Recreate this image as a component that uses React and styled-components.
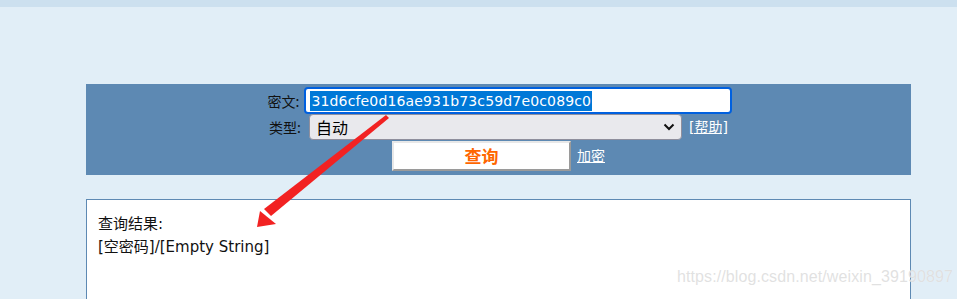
import React from 'react'
import styled, { createGlobalStyle } from 'styled-components'

const GlobalStyle = createGlobalStyle`
  html, body {
    margin: 0;
    padding: 0;
    background: #e1eef7;
    font-family: 'Noto Sans CJK SC', 'Liberation Sans', sans-serif;
  }
`

const Page = styled.div`
  position: relative;
  width: 957px;
  height: 299px;
  overflow: hidden;
  background: #e1eef7;
`

const TopStrip = styled.div`
  height: 7px;
  background: #cce0ef;
`

const Panel = styled.form`
  margin: 77px 0 0 86px;
  width: 825px;
  height: 91px;
  box-sizing: border-box;
  padding-top: 3px;
  background: #5d89b3;
  display: flex;
  flex-direction: column;
  align-items: center;
`

const Row = styled.div`
  display: flex;
  align-items: center;
  height: ${(p) => p.$h}px;
  margin-left: ${(p) => p.$shift || 0}px;
`

const Label = styled.span`
  font-size: 14px;
  color: #111;
  margin-right: ${(p) => p.$gap}px;
  line-height: 1;
`

const FakeInput = styled.div`
  width: 428px;
  height: 27px;
  box-sizing: border-box;
  border: 2px solid #0060df;
  border-radius: 4px;
  background: #fff;
  display: flex;
  align-items: center;
  padding-left: 4px;
`

const Selected = styled.span`
  background: #0078d7;
  color: #fff;
  font-family: 'DejaVu Sans', Verdana, sans-serif;
  font-size: 14px;
  letter-spacing: 0.15px;
  line-height: 20px;
  padding: 0 1px;
`

const Select = styled.div`
  width: 373px;
  height: 26px;
  box-sizing: border-box;
  border: 1px solid #8f8f9d;
  border-radius: 4px;
  background: #e9e9ed;
  display: flex;
  align-items: center;
  justify-content: space-between;
  padding: 0 6px 0 6px;
  font-size: 16px;
  color: #000;
`

const Link = styled.a`
  color: #fff;
  font-family: 'DejaVu Sans', 'Noto Sans CJK SC', sans-serif;
  font-size: 14px;
  text-decoration: underline;
  margin-left: ${(p) => p.$gap}px;
  line-height: 1;
`

const QueryButton = styled.button`
  width: 179px;
  height: 30px;
  box-sizing: border-box;
  background: #fff;
  border: 2px solid;
  border-color: #e8e8e8 #9a9a9a #9a9a9a #e8e8e8;
  color: #ff6600;
  font-family: 'Noto Sans CJK SC', sans-serif;
  font-weight: bold;
  font-size: 17px;
  padding: 0;
  line-height: 1;
`

const ResultBox = styled.div`
  margin: 24px 0 0 86px;
  width: 825px;
  height: 140px;
  box-sizing: border-box;
  border: 1px solid #5d89b3;
  background: #fff;
  padding: 13px 11px;
  font-family: 'DejaVu Sans', 'Noto Sans CJK SC', sans-serif;
  font-size: 15px;
  line-height: 23px;
  color: #111;
`

const Arrow = styled.svg`
  position: absolute;
  left: 0;
  top: 0;
  pointer-events: none;
`

const Watermark = styled.div`
  position: absolute;
  left: 677px;
  top: 268px;
  font-family: 'Liberation Sans', Arial, sans-serif;
  font-size: 16px;
  color: rgba(220, 220, 220, 0.85);
  text-shadow: 0 0 1px rgba(255, 255, 255, 0.6);
  letter-spacing: 0.1px;
`

const Chevron = () => (
  <svg width="12" height="8" viewBox="0 0 12 8">
    <path d="M1.5 1.5 L6 6 L10.5 1.5" fill="none" stroke="#111" strokeWidth="2" />
  </svg>
)

export default function App() {
  return (
    <Page>
      <GlobalStyle />
      <TopStrip />
      <Panel onSubmit={(e) => e.preventDefault()}>
        <Row $h={27} $shift={3}>
          <Label $gap={5}>密文:</Label>
          <FakeInput>
            <Selected>31d6cfe0d16ae931b73c59d7e0c089c0</Selected>
          </FakeInput>
        </Row>
        <Row $h={26} $shift={0}>
          <Label $gap={8}>类型:</Label>
          <Select>
            <span>自动</span>
            <Chevron />
          </Select>
          <Link $gap={7} href="#">[帮助]</Link>
        </Row>
        <Row $h={31} $shift={0}>
          <QueryButton type="submit">查询</QueryButton>
          <Link $gap={6} href="#">加密</Link>
        </Row>
      </Panel>
      <ResultBox>
        <div>查询结果:</div>
        <div>[空密码]/[Empty String]</div>
      </ResultBox>
      <Arrow width="957" height="299" viewBox="0 0 957 299">
        <polygon points="386,115 389,118 271,216 264,209" fill="#f22222" />
        <polygon points="257,227 260,211 276,224" fill="#f22222" />
      </Arrow>
      <Watermark>https://blog.csdn.net/weixin_39190897</Watermark>
    </Page>
  )
}
